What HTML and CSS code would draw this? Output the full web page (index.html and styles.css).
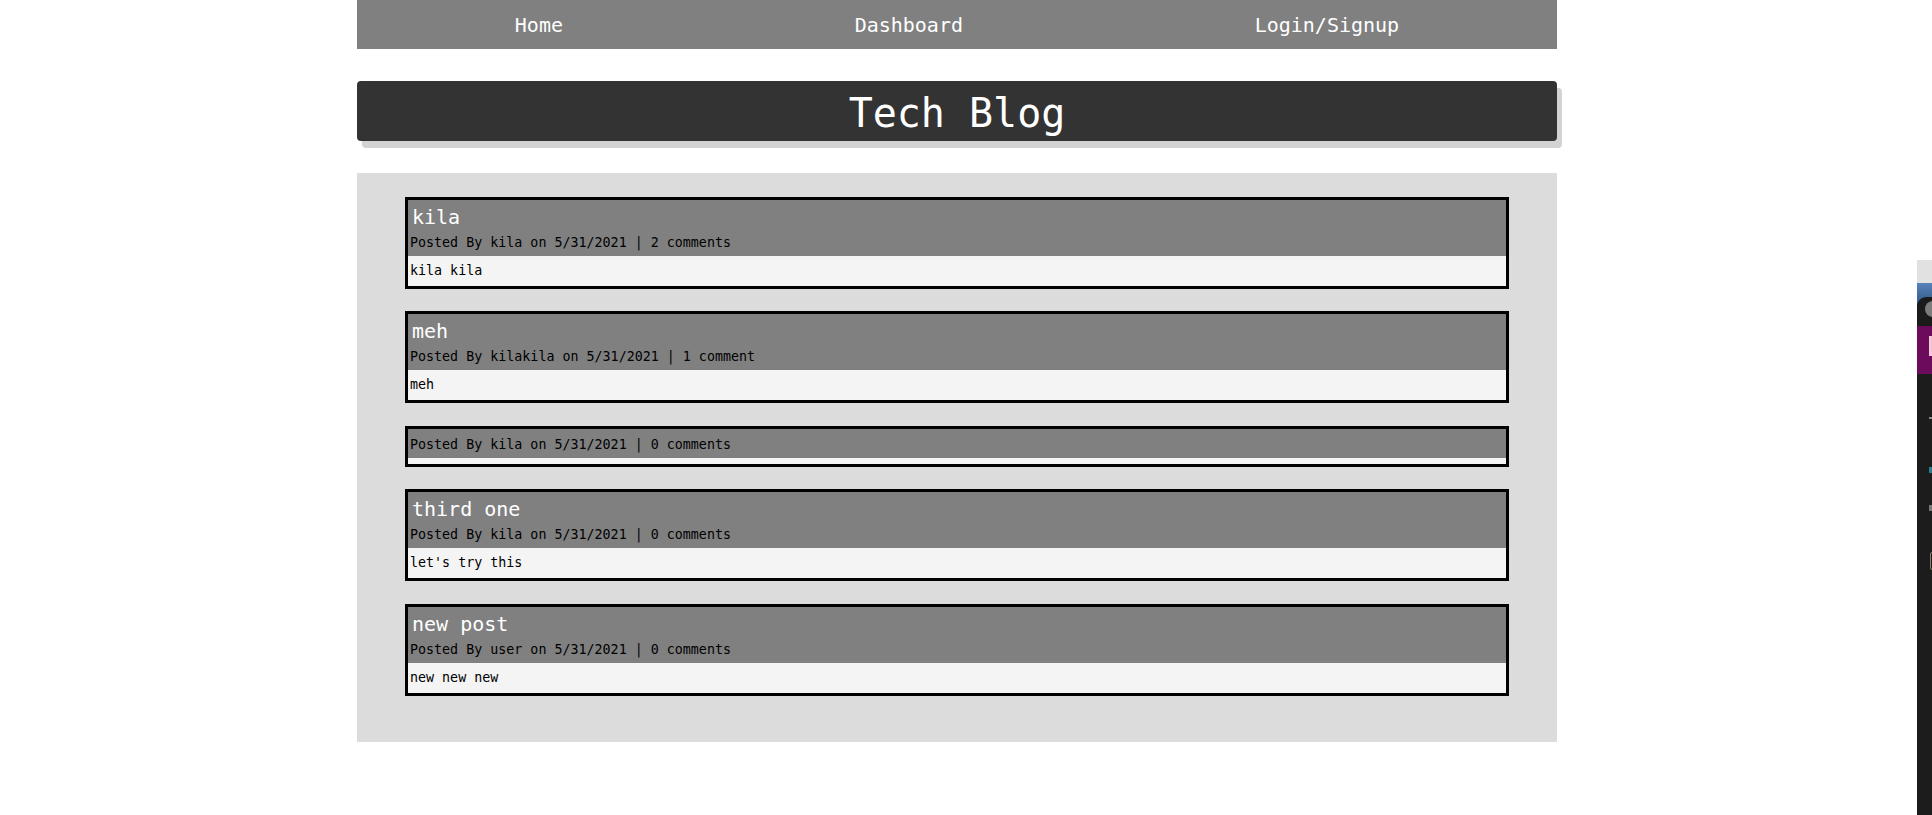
FILE: index.html
```html
<!DOCTYPE html>
<html lang="en">
<head>
<meta charset="utf-8">
<title>Tech Blog</title>
<link rel="stylesheet" href="styles.css">
</head>
<body>
<div class="viewport">
  <div class="container">
    <nav class="nav">
      <a href="#">Home</a>
      <a href="#">Dashboard</a>
      <a href="#">Login/Signup</a>
    </nav>
    <header class="title-bar"><h1>Tech Blog</h1></header>
    <main class="posts">
      <article class="post">
        <div class="post-head">
          <h2 class="post-title">kila</h2>
          <p class="post-meta">Posted By kila on 5/31/2021 | 2 comments</p>
        </div>
        <div class="post-body"><p>kila kila</p></div>
      </article>
      <article class="post">
        <div class="post-head">
          <h2 class="post-title">meh</h2>
          <p class="post-meta">Posted By kilakila on 5/31/2021 | 1 comment</p>
        </div>
        <div class="post-body"><p>meh</p></div>
      </article>
      <article class="post">
        <div class="post-head">
          <p class="post-meta">Posted By kila on 5/31/2021 | 0 comments</p>
        </div>
        <div class="post-body"><p></p></div>
      </article>
      <article class="post">
        <div class="post-head">
          <h2 class="post-title">third one</h2>
          <p class="post-meta">Posted By kila on 5/31/2021 | 0 comments</p>
        </div>
        <div class="post-body"><p>let's try this</p></div>
      </article>
      <article class="post">
        <div class="post-head">
          <h2 class="post-title">new post</h2>
          <p class="post-meta">Posted By user on 5/31/2021 | 0 comments</p>
        </div>
        <div class="post-body"><p>new new new</p></div>
      </article>
    </main>
  </div>
</div>
<div class="side-window" aria-hidden="true">
  <div class="sw-top"></div>
  <div class="sw-blue"></div>
  <div class="sw-tab"><span class="sw-dot"></span></div>
  <div class="sw-purple"><span class="sw-mark"></span></div>
  <div class="sw-dark">
    <span class="sw-glyph g1"></span>
    <span class="sw-glyph g2"></span>
    <span class="sw-glyph g3"></span>
    <span class="sw-box"></span>
  </div>
</div>
</body>
</html>
```
FILE: styles.css
```css
body {
  margin: 0;
  font-family: "DejaVu Sans Mono", "Liberation Mono", monospace;
  background: #fff;
  color: #000;
}

.viewport {
  width: 1914px;
}

.container {
  width: 1200px;
  margin: 0 auto;
}

.nav {
  height: 49px;
  box-sizing: border-box;
  padding: 0 12px;
  background: #808080;
  display: flex;
  justify-content: space-around;
  align-items: center;
}

.nav a {
  color: #fff;
  text-decoration: none;
  font-size: 20px;
  line-height: 24px;
}

.title-bar {
  margin-top: 32px;
  height: 60px;
  box-sizing: border-box;
  padding-top: 5px;
  background: #333;
  border-radius: 4px;
  box-shadow: 5px 7px 0 #d3d3d3;
}

.title-bar h1 {
  margin: 0;
  font-size: 40px;
  line-height: 54px;
  font-weight: normal;
  color: #fff;
  text-align: center;
}

.posts {
  margin-top: 32px;
  background: #dcdcdc;
  padding: 24px 0 46px;
  display: flex;
  flex-direction: column;
  align-items: center;
  gap: 22.4px;
}

.post {
  width: 92%;
  box-sizing: border-box;
  border: 3px solid #000;
}

.post-head {
  background: #808080;
  padding: 4px 0 1px;
}

.post-title {
  margin: 0;
  padding-left: 4px;
  font-size: 20px;
  line-height: 27px;
  font-weight: normal;
  color: #fff;
}

.post-meta {
  margin: 0;
  padding-left: 2px;
  font-size: 13.33px;
  line-height: 24px;
  color: #000;
}

.post-body {
  background: #f4f4f4;
  padding: 3px 0 3px 2px;
  font-size: 13.33px;
  line-height: 24px;
}

.post-body p {
  margin: 0;
}

/* partially visible window at the right edge of the screen */
.side-window {
  position: absolute;
  left: 1917px;
  top: 260px;
  width: 15px;
  height: 555px;
  display: flex;
  flex-direction: column;
  overflow: hidden;
}

.sw-top {
  height: 23px;
  background: #e1e1e1;
}

.sw-blue {
  height: 14px;
  background: linear-gradient(#5783bb, #3f6698);
}

.sw-tab {
  height: 29px;
  background: #3f6698;
  position: relative;
}

.sw-tab::before {
  content: "";
  position: absolute;
  inset: 0;
  background: #1b1b1b;
  border-top-left-radius: 9px;
}

.sw-dot {
  position: absolute;
  left: 8px;
  top: 4px;
  width: 16px;
  height: 16px;
  border-radius: 50%;
  background: #7c7c7c;
}

.sw-purple {
  height: 48px;
  background: #6c0b5c;
  position: relative;
}

.sw-mark {
  position: absolute;
  left: 12px;
  top: 10px;
  width: 4px;
  height: 20px;
  background: #f3c9d8;
}

.sw-dark {
  flex: 1;
  background: #1c1c1d;
  position: relative;
}

.sw-glyph {
  position: absolute;
  left: 12px;
  width: 3px;
  height: 2px;
  background: #8a8a8a;
}

.g1 { top: 43px; }
.g2 { top: 93px; width: 3px; height: 6px; background: #2a7f8f; }
.g3 { top: 131px; height: 6px; background: #777; }

.sw-box {
  position: absolute;
  left: 13px;
  top: 178px;
  width: 4px;
  height: 16px;
  border: 1px solid #8c7f66;
  border-radius: 2px;
}
```
